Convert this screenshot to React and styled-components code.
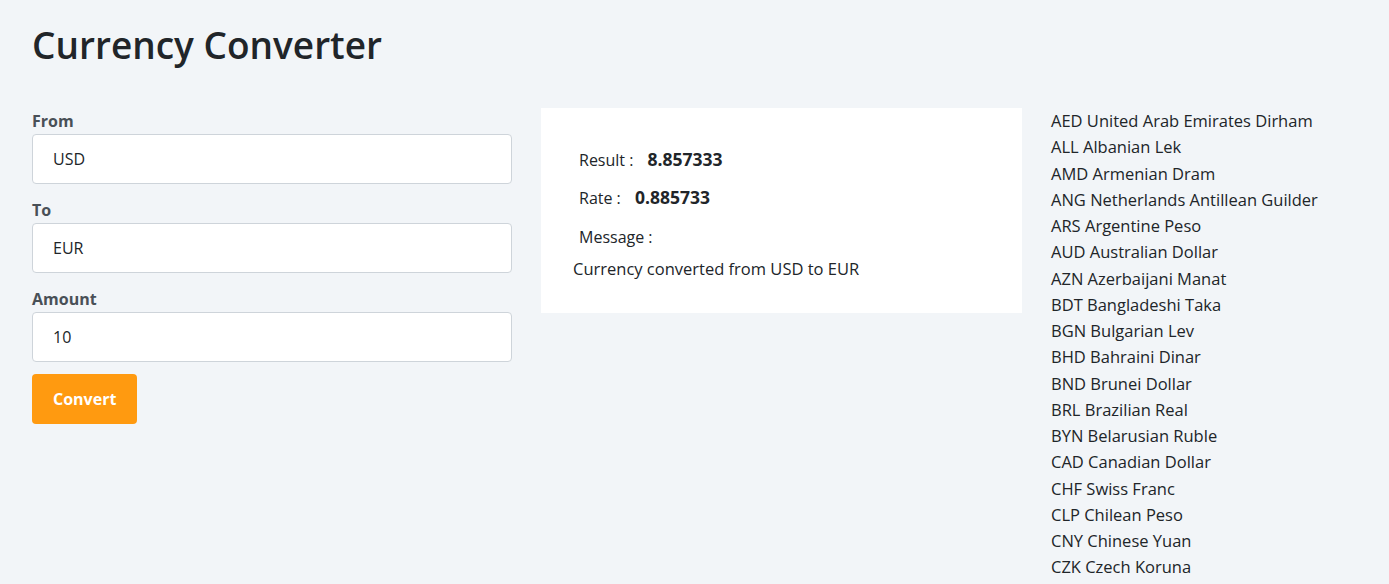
import styled, { createGlobalStyle } from 'styled-components';

const GlobalStyle = createGlobalStyle`
    * { box-sizing: border-box; }
    body {
        margin: 0;
        background: #f2f5f8;
        font-family: "Open Sans", "Noto Sans", sans-serif;
        color: #212529;
    }
`

const Page = styled.main`
    padding: 21px 32px 0;
`

const Title = styled.h1`
    font-size: 37px;
    font-weight: 600;
    margin: 0 0 39px;
    line-height: 48px;
    color: #212529;
`

const Columns = styled.div`
    display: grid;
    grid-template-columns: 480px 481px 1fr;
    column-gap: 29px;
    align-items: start;
`

const Form = styled.form`
    display: flex;
    flex-direction: column;
`

const Label = styled.label`
    font-size: 16px;
    font-weight: 700;
    color: #495057;
    line-height: 26px;
`

const Input = styled.input`
    height: 50px;
    width: 100%;
    padding: 0 20px;
    border: 1px solid #ced4da;
    border-radius: 4px;
    background: #fff;
    font-family: inherit;
    font-size: 16px;
    color: #212529;
    margin-bottom: 13px;
`

const Button = styled.button`
    align-self: flex-start;
    height: 50px;
    padding: 0 21px;
    margin-top: -1px;
    border: none;
    border-radius: 4px;
    background: #ff9a10;
    color: #fff;
    font-family: inherit;
    font-size: 16px;
    font-weight: 700;
`

const Card = styled.section`
    background: #fff;
    padding: 38px 32px 31px;
    font-size: 16px;
`

const Row = styled.div`
    padding-left: ${p => p.$indent ? '6px' : '0'};
    line-height: 26px;
    margin-bottom: ${p => p.$gap || 0}px;
    font-size: ${p => p.$size || 16}px;
`

const Value = styled.b`
    font-weight: 700;
    font-size: 17.5px;
    margin-left: 10px;
`

const List = styled.ul`
    list-style: none;
    margin: 0;
    padding: 0;
    font-size: 16.5px;
    line-height: 26.25px;
    color: #212529;
`

const currencies = [
    'AED United Arab Emirates Dirham',
    'ALL Albanian Lek',
    'AMD Armenian Dram',
    'ANG Netherlands Antillean Guilder',
    'ARS Argentine Peso',
    'AUD Australian Dollar',
    'AZN Azerbaijani Manat',
    'BDT Bangladeshi Taka',
    'BGN Bulgarian Lev',
    'BHD Bahraini Dinar',
    'BND Brunei Dollar',
    'BRL Brazilian Real',
    'BYN Belarusian Ruble',
    'CAD Canadian Dollar',
    'CHF Swiss Franc',
    'CLP Chilean Peso',
    'CNY Chinese Yuan',
    'CZK Czech Koruna',
]

function App(){
    return(
        <>
            <GlobalStyle/>
            <Page>
                <Title>Currency Converter</Title>
                <Columns>
                    <Form onSubmit={e => e.preventDefault()}>
                        <Label>From</Label>
                        <Input defaultValue="USD"/>
                        <Label>To</Label>
                        <Input defaultValue="EUR"/>
                        <Label>Amount</Label>
                        <Input defaultValue="10"/>
                        <Button>Convert</Button>
                    </Form>

                    <Card>
                        <Row $indent $gap={11}>Result : <Value>8.857333</Value></Row>
                        <Row $indent $gap={13}>Rate : <Value>0.885733</Value></Row>
                        <Row $indent $gap={6}>Message :</Row>
                        <Row $size={16.5}>Currency converted from USD to EUR</Row>
                    </Card>

                    <List>
                        {currencies.map(c => <li key={c}>{c}</li>)}
                    </List>
                </Columns>
            </Page>
        </>
    )
}

export default App
